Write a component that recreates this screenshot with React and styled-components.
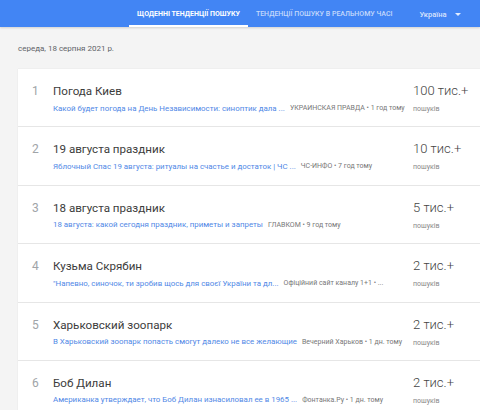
import React from "react";
import styled, { createGlobalStyle } from "styled-components";

const trends = [
  {
    title: "Погода Киев",
    article: "Какой будет погода на День Независимости: синоптик дала ...",
    source: "УКРАИНСКАЯ ПРАВДА • 1 год тому",
    count: "100 тис.+",
  },
  {
    title: "19 августа праздник",
    article: "Яблочный Спас 19 августа: ритуалы на счастье и достаток | ЧС ...",
    source: "ЧС-ИНФО • 7 год тому",
    count: "10 тис.+",
  },
  {
    title: "18 августа праздник",
    article: "18 августа: какой сегодня праздник, приметы и запреты",
    source: "ГЛАВКОМ • 9 год тому",
    count: "5 тис.+",
  },
  {
    title: "Кузьма Скрябин",
    article: "\"Напевно, синочок, ти зробив щось для своєї України та дл...",
    source: "Офіційний сайт каналу 1+1 • ...",
    count: "2 тис.+",
  },
  {
    title: "Харьковский зоопарк",
    article: "В Харьковский зоопарк попасть смогут далеко не все желающие",
    source: "Вечерний Харьков • 1 дн. тому",
    count: "2 тис.+",
  },
  {
    title: "Боб Дилан",
    article: "Американка утверждает, что Боб Дилан изнасиловал ее в 1965 ...",
    source: "Фонтанка.Ру • 1 дн. тому",
    count: "2 тис.+",
  },
];

const App = () => {
  return (
    <Page>
      <GlobalStyle />
      <Header>
        <Tab active>ЩОДЕННІ ТЕНДЕНЦІЇ ПОШУКУ</Tab>
        <Tab>ТЕНДЕНЦІЇ ПОШУКУ В РЕАЛЬНОМУ ЧАСІ</Tab>
        <Country>
          Україна
          <Caret />
        </Country>
      </Header>
      <Content>
        <DateLabel>середа, 18 серпня 2021 р.</DateLabel>
        <Card>
          {trends.map((t, i) => (
            <Row key={t.title}>
              <Index>{i + 1}</Index>
              <Main>
                <Title>{t.title}</Title>
                <Meta>
                  <Article>{t.article}</Article>
                  <Source>{t.source}</Source>
                </Meta>
              </Main>
              <Stats>
                <Count>{t.count}</Count>
                <Searches>пошуків</Searches>
              </Stats>
            </Row>
          ))}
        </Card>
      </Content>
    </Page>
  );
};

const GlobalStyle = createGlobalStyle`
  html, body {
    margin: 0;
    padding: 0;
    background: #f4f4f4;
    font-family: Roboto, "Noto Sans", sans-serif;
    overflow: hidden;
  }
`;

const Page = styled.div`
  width: 480px;
  height: 410px;
  overflow: hidden;
  background: #f4f4f4;
`;

const Header = styled.div`
  height: 27px;
  background: #4285f4;
  display: flex;
  align-items: stretch;
  padding-left: 129px;
  box-shadow: 0 1px 2px rgba(0, 0, 0, 0.15);
`;

const Tab = styled.div`
  display: flex;
  align-items: center;
  padding: 0 8px;
  font-size: 7px;
  font-weight: ${(p) => (p.active ? 700 : 500)};
  color: ${(p) => (p.active ? "#fff" : "rgba(255,255,255,0.7)")};
  border-bottom: 2px solid ${(p) => (p.active ? "#fff" : "transparent")};
  padding-top: 2px;
  white-space: nowrap;
`;

const Country = styled.div`
  display: flex;
  align-items: center;
  margin-left: 19px;
  padding-top: 1px;
  font-size: 7.5px;
  font-weight: 500;
  color: rgba(255, 255, 255, 0.8);
`;

const Caret = styled.span`
  margin-left: 8px;
  width: 0;
  height: 0;
  border-left: 3px solid transparent;
  border-right: 3px solid transparent;
  border-top: 3px solid rgba(255, 255, 255, 0.85);
`;

const Content = styled.div`
  padding: 0 0 0 18px;
`;

const DateLabel = styled.div`
  height: 41px;
  display: flex;
  align-items: center;
  padding-top: 1px;
  font-size: 8px;
  color: #5f6368;
`;

const Card = styled.div`
  width: 480px;
  background: #fff;
  box-shadow: 0 0 1px rgba(0, 0, 0, 0.12);
`;

const Row = styled.div`
  display: flex;
  height: 58.4px;
  box-sizing: border-box;
  padding-top: 14px;
  border-bottom: 1px solid #e6e6e6;
`;

const Index = styled.div`
  width: 35px;
  box-sizing: border-box;
  padding-left: 14px;
  font-size: 12px;
  line-height: 16px;
  color: #a0a4a8;
`;

const Main = styled.div`
  width: 360px;
  min-width: 0;
`;

const Title = styled.div`
  font-size: 11.6px;
  line-height: 16px;
  color: #3c3c3c;
`;

const Meta = styled.div`
  display: flex;
  align-items: center;
  margin-top: 4px;
  height: 10px;
  white-space: nowrap;
`;

const Article = styled.span`
  font-size: 7.9px;
  color: #5088e6;
  margin-right: 5px;
`;

const Source = styled.span`
  font-size: 7px;
  color: #777;
`;

const Stats = styled.div`
  display: flex;
  flex-direction: column;
`;

const Count = styled.div`
  font-size: 13px;
  font-weight: 300;
  line-height: 18px;
  margin-top: -1px;
  color: #444;
`;

const Searches = styled.div`
  margin-top: 5px;
  font-size: 7px;
  color: #888;
`;

export default App;
